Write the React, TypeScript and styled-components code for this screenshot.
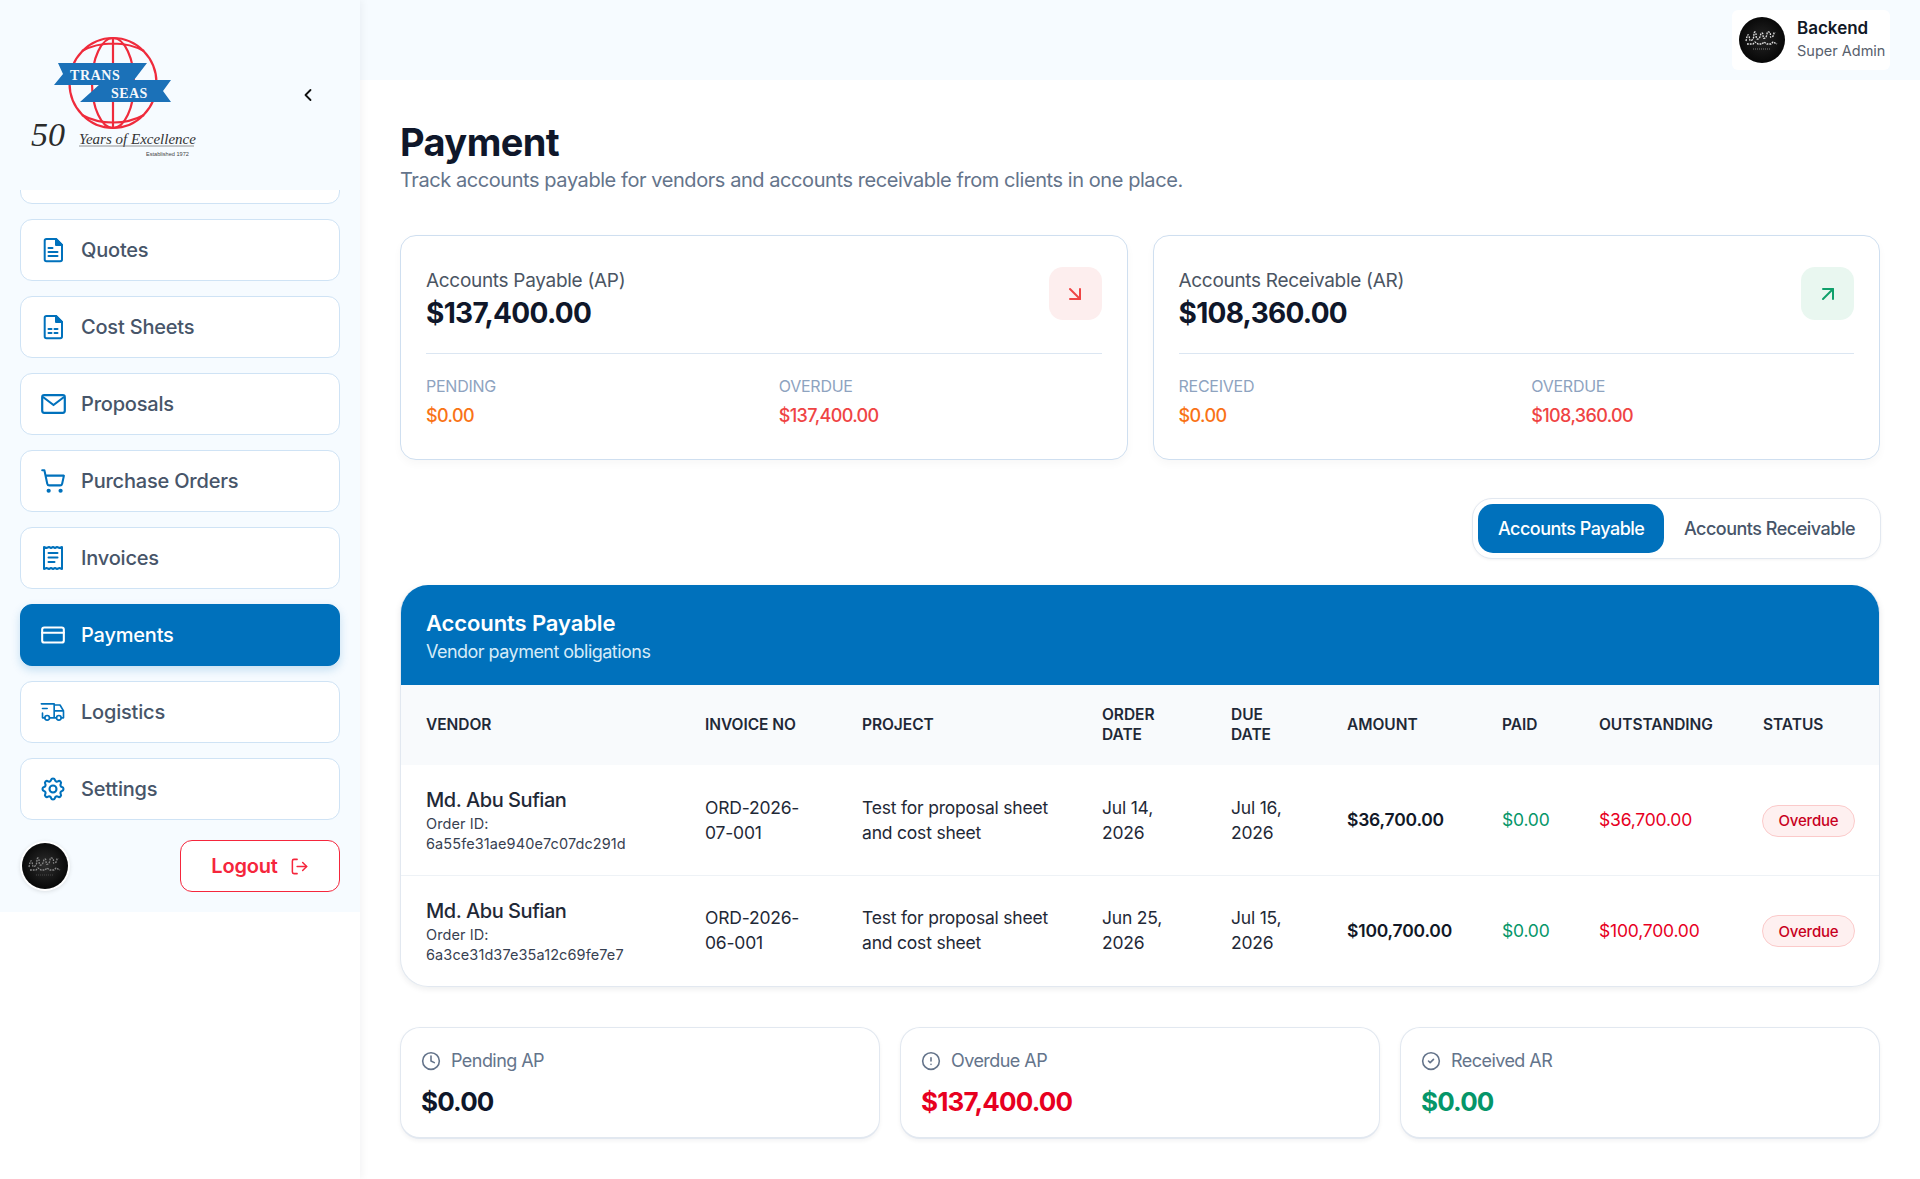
import React from "react";
import styled, { createGlobalStyle } from "styled-components";
import {
  ArrowDownRight,
  ArrowUpRight,
  ChevronLeft,
  CircleAlert,
  CircleCheck,
  Clock,
  CreditCard,
  LogOut,
  ShoppingCart,
} from "lucide-react";
import { TbSettings, TbTruckDelivery } from "react-icons/tb";

const BLUE = "#0071bc";
const FONT = `Inter, "Noto Sans", "Liberation Sans", sans-serif`;

const Global = createGlobalStyle`
  html, body { margin: 0; padding: 0; background: #fff; }
  body { font-family: ${FONT}; overflow: hidden; }
  * { box-sizing: border-box; }
`;

const Shell = styled.div`
  display: flex;
  width: 1920px;
  height: 1179px;
  background: #fff;
  overflow: hidden;
`;
const Aside = styled.aside`
  width: 360px;
  flex: none;
  box-shadow: 2px 0 8px rgba(15, 23, 42, 0.05);
  position: relative;
  z-index: 1;
`;
const SideInner = styled.div`
  height: 912px;
  background: #f6fbff;
  display: flex;
  flex-direction: column;
`;
const LogoBar = styled.div`
  height: 190px;
  flex: none;
  display: flex;
  align-items: center;
  justify-content: space-between;
  padding: 0 42px 0 30px;
  color: #111;
`;
const NavList = styled.nav`
  height: 640px;
  overflow: hidden;
  padding: 0 20px;
  display: flex;
  flex-direction: column;
  gap: 15px;
`;
const NavItem = styled.div<{ $active?: boolean }>`
  height: 62px;
  flex: none;
  display: flex;
  align-items: center;
  gap: 15px;
  padding-left: 19px;
  border-radius: 12px;
  border: 1px solid ${(p) => (p.$active ? BLUE : "#cfe3f5")};
  background: ${(p) => (p.$active ? BLUE : "#fff")};
  color: ${(p) => (p.$active ? "#fff" : "#475569")};
  font-size: 20px;
  font-weight: 450;
  letter-spacing: -0.2px;
  box-shadow: ${(p) => (p.$active ? "0 4px 10px rgba(0,113,188,.2)" : "none")};
  svg { color: ${(p) => (p.$active ? "#fff" : BLUE)}; flex: none; }
`;
const ScrolledItem = styled(NavItem)`
  margin-top: -48px;
`;
const IconSlot = styled.span`
  width: 26px;
  height: 26px;
  display: flex;
  align-items: center;
  justify-content: center;
`;
const SideFoot = styled.div`
  display: flex;
  align-items: center;
  justify-content: space-between;
  padding: 10px 20px 0 22px;
`;
const AvatarRing = styled.span<{ $ring?: boolean }>`
  display: inline-flex;
  border-radius: 50%;
  ${(p) => (p.$ring ? "box-shadow: 0 0 0 2px #fff, 0 1px 5px 1px rgba(0,0,0,.16);" : "")}
`;
const LogoutBtn = styled.button`
  width: 160px;
  height: 52px;
  border: 1.5px solid #f5263c;
  border-radius: 12px;
  background: #fff;
  color: #f5263c;
  font-family: ${FONT};
  font-size: 20px;
  font-weight: 600;
  letter-spacing: -0.2px;
  display: flex;
  align-items: center;
  justify-content: center;
  gap: 12px;
  padding: 0;
`;

const Main = styled.div`
  flex: 1;
  min-width: 0;
  display: flex;
  flex-direction: column;
`;
const TopBar = styled.header`
  height: 80px;
  flex: none;
  background: #f6fbff;
  display: flex;
  align-items: flex-start;
  justify-content: flex-end;
  padding: 10px 30px 0 0;
`;
const UserCard = styled.div`
  width: 158px;
  height: 60px;
  background: #fff;
  border-radius: 6px;
  display: flex;
  align-items: center;
  gap: 12px;
  padding-left: 7px;
`;
const UserText = styled.div`
  display: flex;
  flex-direction: column;
  gap: 2px;
  margin-top: -3px;
`;
const UserName = styled.div`
  font-size: 17px;
  font-weight: 600;
  line-height: 22px;
  color: #111827;
`;
const UserRole = styled.div`
  font-size: 14.5px;
  line-height: 20px;
  color: #57606c;
  white-space: nowrap;
`;
const Content = styled.main`
  padding: 40px 40px 0;
`;
const Title = styled.h1`
  margin: 0;
  font-size: 38px;
  line-height: 44px;
  font-weight: 700;
  letter-spacing: -0.6px;
  color: #0f172a;
`;
const Sub = styled.p`
  margin: 2px 0 0;
  font-size: 20px;
  line-height: 28px;
  letter-spacing: -0.43px;
  color: #64748b;
`;
const Summary = styled.section`
  margin-top: 41px;
  display: grid;
  grid-template-columns: 1fr 1fr;
  gap: 25px;
`;
const SumCard = styled.div`
  height: 225px;
  border: 1px solid #cfdff0;
  border-radius: 16px;
  background: #fff;
  padding: 31px 25px 0;
  box-shadow: 0 4px 8px rgba(15, 23, 42, 0.03);
`;
const SumHead = styled.div`
  display: flex;
  justify-content: space-between;
  align-items: flex-start;
  height: 87px;
  border-bottom: 1px solid #dbe6f2;
`;
const SumLabel = styled.div`
  font-size: 19px;
  line-height: 28px;
  letter-spacing: -0.3px;
  color: #4b5563;
`;
const SumAmount = styled.div`
  font-size: 28px;
  line-height: 36px;
  font-weight: 700;
  letter-spacing: -0.7px;
  color: #0f172a;
`;
const SumIcon = styled.div<{ $bg: string; $fg: string }>`
  width: 53px;
  height: 53px;
  border-radius: 14px;
  background: ${(p) => p.$bg};
  color: ${(p) => p.$fg};
  display: flex;
  align-items: center;
  justify-content: center;
`;
const SumCols = styled.div`
  margin-top: 22px;
  display: grid;
  grid-template-columns: 1fr 1fr;
  gap: 30px;
`;
const SumKey = styled.div`
  font-size: 16px;
  line-height: 20px;
  letter-spacing: -0.25px;
  color: #8ea3bf;
`;
const SumVal = styled.div<{ $c: string }>`
  margin-top: 8px;
  font-size: 18px;
  line-height: 24px;
  font-weight: 500;
  letter-spacing: -0.62px;
  color: ${(p) => p.$c};
`;
const TabsRow = styled.div`
  margin-top: 38px;
  display: flex;
  justify-content: flex-end;
`;
const Tabs = styled.div`
  height: 61px;
  padding: 5px;
  border: 1px solid #e2e8f0;
  border-radius: 20px;
  background: #fff;
  display: flex;
  align-items: stretch;
  margin-right: -1px;
  box-shadow: 0 1px 3px rgba(15, 23, 42, 0.05);
`;
const Tab = styled.button<{ $active?: boolean }>`
  border: 0;
  padding: 0 ${(p) => (p.$active ? 19.5 : 20)}px;
  border-radius: 15px;
  background: ${(p) => (p.$active ? BLUE : "transparent")};
  color: ${(p) => (p.$active ? "#fff" : "#475569")};
  font-family: ${FONT};
  font-size: 18px;
  font-weight: 500;
  letter-spacing: -0.5px;
`;
const TableCard = styled.section`
  margin-top: 26px;
  height: 402px;
  border-radius: 28px;
  overflow: hidden;
  background: #fff;
  border: 1px solid #e2e8f0;
  border-top: 0;
  box-shadow: 0 2px 6px rgba(15, 23, 42, 0.08);
`;
const TableHead = styled.div`
  height: 100px;
  margin: 0 -1px;
  background: ${BLUE};
  padding: 24px 26px 0;
  color: #fff;
`;
const TableTitle = styled.div`
  font-size: 22px;
  line-height: 28px;
  font-weight: 600;
  letter-spacing: -0.1px;
`;
const TableSub = styled.div`
  margin-top: 3px;
  font-size: 18px;
  line-height: 24px;
  letter-spacing: -0.53px;
  color: #d6ebf8;
`;
const Table = styled.table`
  width: 1480px;
  margin-left: -1px;
  border-collapse: collapse;
  table-layout: fixed;
`;
const Th = styled.th`
  height: 80px;
  padding: 0 10px 0 26px;
  background: #f8fafc;
  text-align: left;
  font-size: 15.5px;
  line-height: 20px;
  font-weight: 600;
  letter-spacing: -0.05px;
  color: #1f2937;
  text-transform: uppercase;
`;
const Tr = styled.tr`
  height: 110px;
  & + & td { border-top: 1px solid #eef2f6; }
`;
const Td = styled.td<{ $c?: string; $w?: number }>`
  padding: 0 10px 0 26px;
  font-size: 17.5px;
  line-height: 25px;
  letter-spacing: -0.2px;
  font-weight: ${(p) => p.$w ?? 400};
  color: ${(p) => p.$c ?? "#1f2937"};
  vertical-align: middle;
`;
const Vendor = styled.div`
  margin-top: 2px;
  font-size: 20px;
  line-height: 26px;
  font-weight: 500;
  letter-spacing: -0.45px;
  color: #1f2937;
`;
const OrderId = styled.div`
  margin-top: 1px;
  font-size: 14.5px;
  line-height: 20px;
  letter-spacing: 0.1px;
  color: #374151;
`;
const Pill = styled.span`
  display: inline-flex;
  align-items: center;
  justify-content: center;
  width: 93px;
  height: 32px;
  margin: 2px 0 0 -1px;
  border-radius: 16px;
  background: #fef0f0;
  border: 1px solid #fbcaca;
  color: #c8001e;
  font-size: 15px;
  font-weight: 500;
`;
const Stats = styled.section`
  margin-top: 40px;
  display: grid;
  grid-template-columns: repeat(3, 1fr);
  gap: 20px;
`;
const Stat = styled.div`
  height: 112px;
  border: 1px solid #e2e8f0;
  border-bottom-width: 2px;
  border-radius: 20px;
  background: #fff;
  padding: 20px 20px 0;
  box-shadow: 0 2px 4px rgba(15, 23, 42, 0.05);
`;
const StatLabel = styled.div`
  display: flex;
  align-items: center;
  gap: 10px;
  font-size: 18px;
  line-height: 26px;
  letter-spacing: -0.55px;
  color: #64748b;
`;
const StatValue = styled.div<{ $c: string }>`
  margin-top: 12px;
  font-size: 26px;
  line-height: 32px;
  font-weight: 700;
  letter-spacing: -0.85px;
  color: ${(p) => p.$c};
`;

const Logo = () => (
  <svg width="170" height="130" viewBox="30 30 170 130" aria-hidden="true">
    <g fill="none" stroke="#ef2b3c" strokeWidth="2.2">
      <ellipse cx="113" cy="83" rx="43.500" ry="45" />
      <ellipse cx="113" cy="83" rx="21" ry="45" />
      <path d="M113 38v90M69 83h88M82 51c18-10 44-10 62 0M82 115c18 10 44 10 62 0" />
    </g>
    <path fill="#1b71b8" d="M58 63h89l-13 17-34 1 0 4H54l9-11z" />
    <path fill="#1b71b8" d="M100 80h71l-8 11 8 11H80l20-18z" />
    <text x="70" y="79.500" fontFamily="'Liberation Serif', serif" fontWeight="700" fontSize="14" fill="#f4f8fc" letterSpacing="0.6">TRANS</text>
    <text x="111" y="97.500" fontFamily="'Liberation Serif', serif" fontWeight="700" fontSize="14" fill="#f4f8fc" letterSpacing="0.4">SEAS</text>
    <text x="31" y="146" fontFamily="'Liberation Serif', serif" fontStyle="italic" fontSize="34" fill="#2b2b2b">50</text>
    <text x="79" y="144" fontFamily="'Liberation Serif', serif" fontStyle="italic" fontSize="15" fill="#333">Years of Excellence</text>
    <path d="M79 146h115" stroke="#777" strokeWidth=".8" />
    <text x="146" y="156" fontFamily="'Liberation Sans', sans-serif" fontSize="5.600" fill="#444">Established 1972</text>
  </svg>
);

const Avatar = ({ size, dim }: { size: number; dim?: boolean }) => {
  const id = dim ? "avatar-dim" : "avatar-top";
  return (
    <svg width={size} height={size} viewBox="0 0 46 46" aria-hidden="true" style={{ display: "block" }}>
      <defs>
        <radialGradient id={id} cx="50%" cy="48%" r="55%">
          <stop offset="0" stopColor={dim ? "#2e2e2e" : "#242424"} />
          <stop offset="1" stopColor="#050505" />
        </radialGradient>
      </defs>
      <circle cx="23" cy="23" r="23" fill={`url(#${id})`} />
      <g fill="none" stroke={dim ? "#8a8a8a" : "#e4e4e4"} strokeWidth="1.300" strokeDasharray="1.800 1">
        <path d="M7 24c1-5 2-8 3-5s0 6 3 4 1-8 3-8 0 8 3 7 2-6 4-6 0 7 3 5 1-7 4-6 0 7 3 5 1-6 3-4" />
        <path d="M8 27h6l2-2 3 2h4l2-2 3 2h4l2-2 4 2" />
      </g>
      <path d="M14 32h18" stroke={dim ? "#555" : "#999"} strokeWidth=".8" strokeDasharray="1 1" />
    </svg>
  );
};

const DocShape = ({ children }: { children: React.ReactNode }) => (
  <svg width="24" height="26" viewBox="0 0 24 26" fill="none" stroke="currentColor" strokeWidth="2" strokeLinecap="round" strokeLinejoin="round" aria-hidden="true">
    <path d="M5.500 2H15l6 6v14.500a1.800 1.800 0 0 1-1.800 1.800H5.500a1.800 1.800 0 0 1-1.800-1.800V3.800A1.800 1.800 0 0 1 5.500 2z" />
    <path d="M15 2v6h6z" fill="currentColor" />
    {children}
  </svg>
);
const QuoteIcon = () => (
  <DocShape>
    <path d="M7.500 11h4M7.500 15h9M7.500 19h9" />
  </DocShape>
);
const SheetIcon = () => (
  <DocShape>
    <path d="M7.500 15h3M13.500 15h3M7.500 19h3M13.500 19h3" />
  </DocShape>
);
const MailIcon = () => (
  <svg width="25" height="20" viewBox="0 0 25 20" fill="none" stroke="currentColor" strokeWidth="2.200" strokeLinejoin="round" aria-hidden="true">
    <rect x="1.200" y="1.200" width="22.600" height="17.600" rx="2" />
    <path d="M2 3l10.500 8L23 3" />
  </svg>
);
const ReceiptIcon = () => (
  <svg width="22" height="26" viewBox="0 0 22 26" fill="none" stroke="currentColor" strokeWidth="2" strokeLinecap="round" strokeLinejoin="round" aria-hidden="true">
    <path d="M2 2l2.500 1L7 2l2 1 2-1 2 1 2-1 2.500 1L20 2v22l-2.500-1-2.500 1-2-1-2 1-2-1-2 1-2.500-1L2 24z" />
    <path d="M6.500 8h9M6.500 12.500h9M6.500 17h6" />
  </svg>
);

const navItems: { label: string; icon: React.ReactNode; active?: boolean }[] = [
  { label: "Quotes", icon: <QuoteIcon /> },
  { label: "Cost Sheets", icon: <SheetIcon /> },
  { label: "Proposals", icon: <MailIcon /> },
  { label: "Purchase Orders", icon: <ShoppingCart size={26} strokeWidth={1.9} /> },
  { label: "Invoices", icon: <ReceiptIcon /> },
  { label: "Payments", icon: <CreditCard size={26} strokeWidth={1.9} />, active: true },
  { label: "Logistics", icon: <TbTruckDelivery size={28} strokeWidth={1.4} /> },
  { label: "Settings", icon: <TbSettings size={28} strokeWidth={1.8} /> },
];

const rows = [
  { id: "6a55fe31ae940e7c07dc291d", inv: ["ORD-2026-", "07-001"], order: ["Jul 14,", "2026"], due: ["Jul 16,", "2026"], amount: "$36,700.00" },
  { id: "6a3ce31d37e35a12c69fe7e7", inv: ["ORD-2026-", "06-001"], order: ["Jun 25,", "2026"], due: ["Jul 15,", "2026"], amount: "$100,700.00" },
];
const colWidths = [279, 157, 240, 129, 116, 155, 97, 164, 143];
const heads = [["Vendor"], ["Invoice No"], ["Project"], ["Order", "Date"], ["Due", "Date"], ["Amount"], ["Paid"], ["Outstanding"], ["Status"]];

const Lines = ({ l }: { l: string[] }) => (
  <>
    {l[0]}
    {l[1] && <br />}
    {l[1]}
  </>
);

export default function App() {
  return (
    <Shell>
      <Global />
      <Aside>
        <SideInner>
          <LogoBar>
            <Logo />
            <ChevronLeft size={20} strokeWidth={2.2} />
          </LogoBar>
          <NavList>
            <ScrolledItem aria-hidden="true" />
            {navItems.map((n) => (
              <NavItem key={n.label} $active={n.active}>
                <IconSlot>{n.icon}</IconSlot>
                {n.label}
              </NavItem>
            ))}
          </NavList>
          <SideFoot>
            <AvatarRing $ring>
              <Avatar size={46} dim />
            </AvatarRing>
            <LogoutBtn>
              Logout
              <LogOut size={19} strokeWidth={1.9} />
            </LogoutBtn>
          </SideFoot>
        </SideInner>
      </Aside>
      <Main>
        <TopBar>
          <UserCard>
            <Avatar size={46} />
            <UserText>
              <UserName>Backend</UserName>
              <UserRole>Super Admin</UserRole>
            </UserText>
          </UserCard>
        </TopBar>
        <Content>
          <Title>Payment</Title>
          <Sub>Track accounts payable for vendors and accounts receivable from clients in one place.</Sub>
          <Summary>
            <SumCard>
              <SumHead>
                <div>
                  <SumLabel>Accounts Payable (AP)</SumLabel>
                  <SumAmount>$137,400.00</SumAmount>
                </div>
                <SumIcon $bg="#fdeeee" $fg="#ef4444">
                  <ArrowDownRight size={24} strokeWidth={2} />
                </SumIcon>
              </SumHead>
              <SumCols>
                <div>
                  <SumKey>PENDING</SumKey>
                  <SumVal $c="#f97316">$0.00</SumVal>
                </div>
                <div>
                  <SumKey>OVERDUE</SumKey>
                  <SumVal $c="#ef4444">$137,400.00</SumVal>
                </div>
              </SumCols>
            </SumCard>
            <SumCard>
              <SumHead>
                <div>
                  <SumLabel>Accounts Receivable (AR)</SumLabel>
                  <SumAmount>$108,360.00</SumAmount>
                </div>
                <SumIcon $bg="#e9f7f0" $fg="#10a06b">
                  <ArrowUpRight size={24} strokeWidth={2} />
                </SumIcon>
              </SumHead>
              <SumCols>
                <div>
                  <SumKey>RECEIVED</SumKey>
                  <SumVal $c="#f97316">$0.00</SumVal>
                </div>
                <div>
                  <SumKey>OVERDUE</SumKey>
                  <SumVal $c="#ef4444">$108,360.00</SumVal>
                </div>
              </SumCols>
            </SumCard>
          </Summary>
          <TabsRow>
            <Tabs>
              <Tab $active>Accounts Payable</Tab>
              <Tab>Accounts Receivable</Tab>
            </Tabs>
          </TabsRow>
          <TableCard>
            <TableHead>
              <TableTitle>Accounts Payable</TableTitle>
              <TableSub>Vendor payment obligations</TableSub>
            </TableHead>
            <Table>
              <colgroup>
                {colWidths.map((w, i) => (
                  <col key={i} style={{ width: w }} />
                ))}
              </colgroup>
              <thead>
                <tr>
                  {heads.map((h) => (
                    <Th key={h[0]}>
                      <Lines l={h} />
                    </Th>
                  ))}
                </tr>
              </thead>
              <tbody>
                {rows.map((r) => (
                  <Tr key={r.id}>
                    <Td>
                      <Vendor>Md. Abu Sufian</Vendor>
                      <OrderId>
                        Order ID:
                        <br />
                        {r.id}
                      </OrderId>
                    </Td>
                    <Td>
                      <Lines l={r.inv} />
                    </Td>
                    <Td>
                      Test for proposal sheet
                      <br />
                      and cost sheet
                    </Td>
                    <Td>
                      <Lines l={r.order} />
                    </Td>
                    <Td>
                      <Lines l={r.due} />
                    </Td>
                    <Td $w={600} $c="#111827">{r.amount}</Td>
                    <Td $c="#059669">$0.00</Td>
                    <Td $c="#e7001f">{r.amount}</Td>
                    <Td>
                      <Pill>Overdue</Pill>
                    </Td>
                  </Tr>
                ))}
              </tbody>
            </Table>
          </TableCard>
          <Stats>
            <Stat>
              <StatLabel>
                <Clock size={20} strokeWidth={1.9} />
                Pending AP
              </StatLabel>
              <StatValue $c="#0f172a">$0.00</StatValue>
            </Stat>
            <Stat>
              <StatLabel>
                <CircleAlert size={20} strokeWidth={1.9} />
                Overdue AP
              </StatLabel>
              <StatValue $c="#e7001f">$137,400.00</StatValue>
            </Stat>
            <Stat>
              <StatLabel>
                <CircleCheck size={20} strokeWidth={1.9} />
                Received AR
              </StatLabel>
              <StatValue $c="#059669">$0.00</StatValue>
            </Stat>
          </Stats>
        </Content>
      </Main>
    </Shell>
  );
}
